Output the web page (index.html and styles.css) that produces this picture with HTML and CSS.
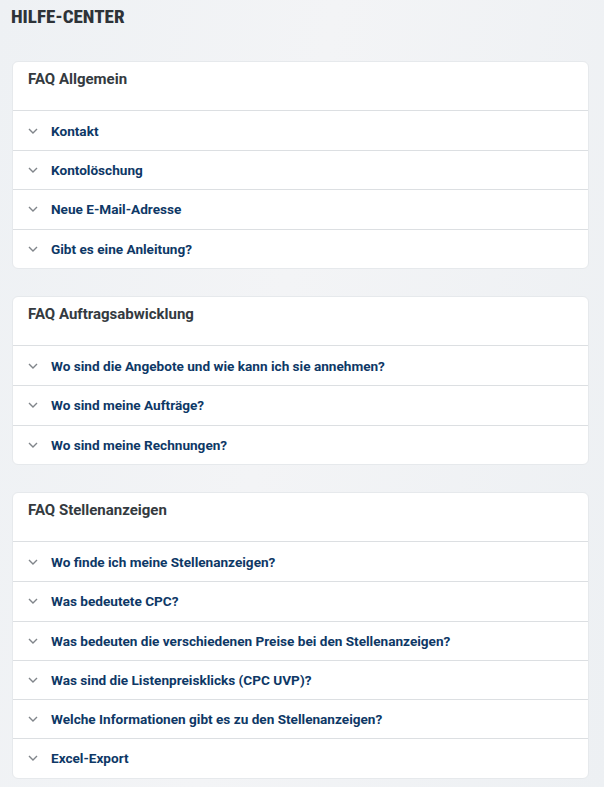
FILE: index.html
```html
<!DOCTYPE html>
<html lang="de">
<head>
<meta charset="utf-8">
<title>Hilfe-Center</title>
<link rel="stylesheet" href="styles.css">
</head>
<body>
<div class="page">
  <h1 class="title">HILFE-CENTER</h1>

  <section class="card">
    <h2 class="card-head">FAQ Allgemein</h2>
    <ul class="faq">
      <li class="row"><svg class="chev" viewBox="0 0 10 6"><path d="M1 1l4 4 4-4"/></svg><span>Kontakt</span></li>
      <li class="row"><svg class="chev" viewBox="0 0 10 6"><path d="M1 1l4 4 4-4"/></svg><span>Kontolöschung</span></li>
      <li class="row"><svg class="chev" viewBox="0 0 10 6"><path d="M1 1l4 4 4-4"/></svg><span>Neue E-Mail-Adresse</span></li>
      <li class="row"><svg class="chev" viewBox="0 0 10 6"><path d="M1 1l4 4 4-4"/></svg><span>Gibt es eine Anleitung?</span></li>
    </ul>
  </section>

  <section class="card">
    <h2 class="card-head">FAQ Auftragsabwicklung</h2>
    <ul class="faq">
      <li class="row"><svg class="chev" viewBox="0 0 10 6"><path d="M1 1l4 4 4-4"/></svg><span>Wo sind die Angebote und wie kann ich sie annehmen?</span></li>
      <li class="row"><svg class="chev" viewBox="0 0 10 6"><path d="M1 1l4 4 4-4"/></svg><span>Wo sind meine Aufträge?</span></li>
      <li class="row"><svg class="chev" viewBox="0 0 10 6"><path d="M1 1l4 4 4-4"/></svg><span>Wo sind meine Rechnungen?</span></li>
    </ul>
  </section>

  <section class="card">
    <h2 class="card-head">FAQ Stellenanzeigen</h2>
    <ul class="faq">
      <li class="row"><svg class="chev" viewBox="0 0 10 6"><path d="M1 1l4 4 4-4"/></svg><span>Wo finde ich meine Stellenanzeigen?</span></li>
      <li class="row"><svg class="chev" viewBox="0 0 10 6"><path d="M1 1l4 4 4-4"/></svg><span>Was bedeutete CPC?</span></li>
      <li class="row"><svg class="chev" viewBox="0 0 10 6"><path d="M1 1l4 4 4-4"/></svg><span>Was bedeuten die verschiedenen Preise bei den Stellenanzeigen?</span></li>
      <li class="row"><svg class="chev" viewBox="0 0 10 6"><path d="M1 1l4 4 4-4"/></svg><span>Was sind die Listenpreisklicks (CPC UVP)?</span></li>
      <li class="row"><svg class="chev" viewBox="0 0 10 6"><path d="M1 1l4 4 4-4"/></svg><span>Welche Informationen gibt es zu den Stellenanzeigen?</span></li>
      <li class="row"><svg class="chev" viewBox="0 0 10 6"><path d="M1 1l4 4 4-4"/></svg><span>Excel-Export</span></li>
    </ul>
  </section>
</div>
</body>
</html>
```

FILE: styles.css
```css
* { box-sizing: border-box; }
html, body { margin: 0; padding: 0; }
body {
  background: linear-gradient(100deg, #eef1f4 0%, #f3f4f6 45%, #edf0f3 100%);
  font-family: Roboto, "Liberation Sans", Arial, sans-serif;
  min-height: 787px;
}
.page {
  width: 604px;
  padding: 5px 15px 0 12px;
  display: flex;
  flex-direction: column;
}
.title {
  margin: 0 0 0 -1px;
  font-family: Roboto, "Liberation Sans Narrow", sans-serif;
  font-stretch: 75%;
  font-weight: 800;
  font-size: 19px;
  line-height: 24px;
  color: #2e3338;
  height: 56px;
}
.card {
  background: #fff;
  border: 1px solid #e6e9ec;
  border-radius: 6px;
  margin-bottom: 27.5px;
}
.card-head {
  margin: 0;
  padding: 8px 15px 0 15px;
  height: 49px;
  font-size: 15px;
  line-height: 19px;
  font-weight: bold;
  color: #343a40;
  border-bottom: 1px solid #dcdfe2;
}
.faq { list-style: none; margin: 0; padding: 0; }
.row {
  display: flex;
  align-items: center;
  height: 39.25px;
  padding-left: 15px;
  font-size: 13.6px;
  font-weight: bold;
  color: #0e3866;
  border-top: 1px solid #dcdfe2;
}
.row:first-child { border-top: 0; height: 39px; }
.chev {
  flex: none;
  width: 10px;
  height: 6px;
  margin-right: 13px;
  fill: none;
  stroke: #80858a;
  stroke-width: 1.4;
}
```
